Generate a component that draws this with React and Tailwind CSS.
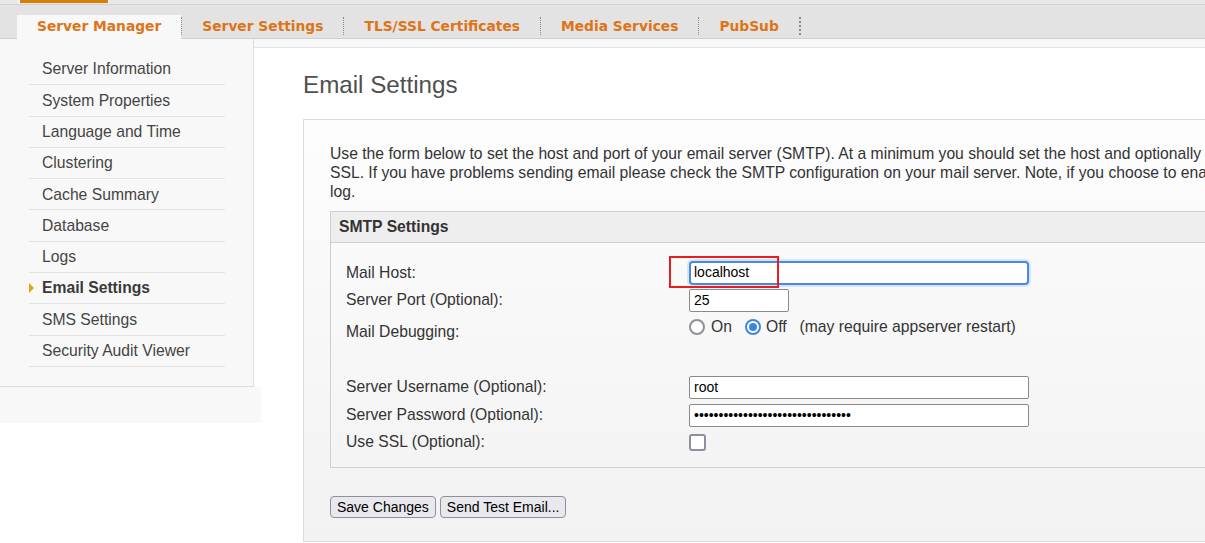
import React from "react";

const tabs = ["Server Manager", "Server Settings", "TLS/SSL Certificates", "Media Services", "PubSub"];
const sideItems = [
  "Server Information",
  "System Properties",
  "Language and Time",
  "Clustering",
  "Cache Summary",
  "Database",
  "Logs",
  "Email Settings",
  "SMS Settings",
  "Security Audit Viewer",
];

function Radio({ checked }) {
  return checked ? (
    <span className="w-4 h-4 rounded-full border-2 border-[#3d86e0] bg-white flex items-center justify-center">
      <span className="w-2 h-2 rounded-full bg-[#3d86e0]" />
    </span>
  ) : (
    <span className="w-4 h-4 rounded-full border-2 border-[#8f8f9d] bg-white" />
  );
}

export default function App() {
  const pw = "12345678901234567890123456789012";
  return (
    <div className="w-[1205px] h-[543px] overflow-hidden bg-white font-['Liberation_Sans',Arial,sans-serif] text-[#333]">
      {/* top strip */}
      <div className="h-[4px] bg-[#e8e8e8] flex">
        <div className="ml-[17px] w-[3px] h-[4px] bg-[#f2f2f2]" />
        <div className="w-[88px] h-[3px] bg-[#d97e0c]" />
        <div className="w-[1px] h-[4px] bg-[#f4f4f4]" />
      </div>
      {/* tab bar */}
      <div className="h-[35px] bg-[#e3e3e3] border-t border-t-[#d2d2d2] border-b border-b-[#d0d0d0] flex items-end pl-[17px]">
        {tabs.map((t, i) => (
          <React.Fragment key={t}>
            <div
              className={
                "h-[24px] -mb-px pb-[2px] px-[20px] flex items-center font-['DejaVu_Sans',sans-serif] font-bold text-[13.8px] text-[#de7317] " +
                (i === 0 ? "bg-[#f8f8f8]" : "")
              }
            >
              {t}
            </div>
            <div
              className={
                "self-center mt-[8px] h-[18px] border-l border-dotted border-l-[#7f8e9c] " +
                (i === tabs.length - 1 ? "border-l-2 w-[2px]" : "w-[1px]")
              }
            />
          </React.Fragment>
        ))}
      </div>
      {/* main */}
      <div className="flex">
        <div className="w-[261px] shrink-0 flex flex-col">
          <div className="flex">
            <div className="w-[254px] bg-[#f8f8f8] border-r border-b border-[#dddddd] pt-[15px] pb-[19px]">
              <div className="ml-[29px] w-[196px]">
                {sideItems.map((s) => {
                  const active = s === "Email Settings";
                  return (
                    <div
                      key={s}
                      className="relative h-[31.3px] border-b border-[#e2e2e2] flex items-center pl-[13px] text-[15.7px]"
                    >
                      {active && (
                        <span className="absolute left-0 top-1/2 -translate-y-1/2 w-0 h-0 border-y-[5px] border-y-transparent border-l-[5px] border-l-[#e2a70e]" />
                      )}
                      <span className={active ? "font-bold text-[#3a3a3a]" : "text-[#444]"}>{s}</span>
                    </div>
                  );
                })}
              </div>
            </div>
            <div className="w-[7px] flex flex-col">
              <div className="h-[8px] bg-[#f8f8f8]" />
              <div className="flex-1 bg-white border-t border-[#e6e6e6]" />
            </div>
          </div>
          <div className="h-[36px] bg-[#f8f8f8]" />
        </div>

        <div className="flex-1 flex flex-col min-w-0">
          <div className="h-[8px] bg-[#f8f8f8]" />
          <div className="bg-white border-t border-[#e6e6e6] pl-[42px] pt-[23px]">
            <h1 className="text-[24.2px] leading-[28px] text-[#505050] font-normal">Email Settings</h1>
            <div className="mt-[20px] w-[1400px] border border-[#dcdcdc] bg-gradient-to-b from-[#fdfdfd] to-[#f2f2f2] pl-[26px] pt-[24px] pb-[23px]">
              <p className="text-[15.7px] leading-[19px] text-[#333] whitespace-nowrap">
                Use the form below to set the host and port of your email server (SMTP). At a minimum you should set the host and optionally the port, username and password if required. To use
                <br />
                SSL. If you have problems sending email please check the SMTP configuration on your mail server. Note, if you choose to enable mail debugging, the output will be written to the
                <br />
                log.
              </p>
              <div className="mt-[10px] border border-[#cfcfcf]">
                <div className="h-[31px] bg-[#eeeeee] border-b border-[#cfcfcf] flex items-center pl-[8px] text-[15.7px] font-bold text-[#333]">
                  SMTP Settings
                </div>
                <div className="pl-[15px] pt-[15px] pb-[12px] text-[15.7px] text-[#333]">
                  <div className="h-[28px] flex items-center pt-[1px]">
                    <div className="w-[343px]">Mail Host:</div>
                    <div className="relative">
                      <div className="w-[340px] h-[24px] border-2 border-[#4a89de] rounded-[4px] bg-white shadow-[0_0_0_2px_#d6e5f8] flex items-center pl-[3px] text-[14px] text-black">
                        localhost
                      </div>
                      <div className="absolute left-[-20px] top-[-5px] w-[110px] h-[32px] border-2 border-[#ea1c1c]" />
                    </div>
                  </div>
                  <div className="h-[28px] flex items-center">
                    <div className="w-[343px]">Server Port (Optional):</div>
                    <div className="w-[100px] h-[23px] border border-[#8a8a8a] rounded-[2px] bg-white flex items-center pl-[4px] text-[14px] text-black">
                      25
                    </div>
                  </div>
                  <div className="h-[34px] flex">
                    <div className="w-[343px] self-center pt-[2px]">Mail Debugging:</div>
                    <div className="pt-[4px] h-[22px] flex items-center">
                      <Radio />
                      <span className="ml-[6px]">On</span>
                      <span className="ml-[13px]"><Radio checked /></span>
                      <span className="ml-[5px]">Off</span>
                      <span className="ml-[13px]">(may require appserver restart)</span>
                    </div>
                  </div>
                  <div className="h-[25px]" />
                  <div className="h-[28px] flex items-center">
                    <div className="w-[343px]">Server Username (Optional):</div>
                    <div className="w-[340px] h-[23px] border border-[#8a8a8a] rounded-[2px] bg-white flex items-center pl-[4px] text-[14px] text-black">
                      root
                    </div>
                  </div>
                  <div className="h-[28px] flex items-center">
                    <div className="w-[343px]">Server Password (Optional):</div>
                    <input
                      type="password"
                      readOnly
                      value={pw}
                      className="w-[340px] h-[23px] border border-[#8a8a8a] rounded-[2px] bg-white pl-[4px] text-[14px] text-black outline-none font-['Liberation_Sans',Arial,sans-serif]"
                    />
                  </div>
                  <div className="h-[26px] flex items-center">
                    <div className="w-[343px]">Use SSL (Optional):</div>
                    <span className="w-[17px] h-[17px] border-2 border-[#8f8f9d] rounded-[3px] bg-white" />
                  </div>
                </div>
              </div>
              <div className="mt-[28px] flex gap-[4px]">
                <button className="h-[22px] px-[6px] border border-[#8f8f9d] rounded-[4px] bg-[#e9e9ed] text-[14px] text-black leading-none">
                  Save Changes
                </button>
                <button className="h-[22px] px-[6px] border border-[#8f8f9d] rounded-[4px] bg-[#e9e9ed] text-[14px] text-black leading-none">
                  Send Test Email...
                </button>
              </div>
            </div>
          </div>
        </div>
      </div>
    </div>
  );
}
